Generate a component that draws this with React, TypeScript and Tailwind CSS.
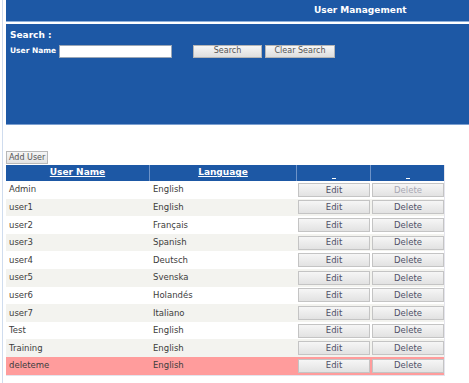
import React from "react";

const rows: { name: string; lang: string; del?: boolean; pink?: boolean }[] = [
  { name: "Admin", lang: "English", del: true },
  { name: "user1", lang: "English" },
  { name: "user2", lang: "Français" },
  { name: "user3", lang: "Spanish" },
  { name: "user4", lang: "Deutsch" },
  { name: "user5", lang: "Svenska" },
  { name: "user6", lang: "Holandés" },
  { name: "user7", lang: "Italiano" },
  { name: "Test", lang: "English" },
  { name: "Training", lang: "English" },
  { name: "deleteme", lang: "English", pink: true },
];

function Btn({ label, disabled }: { label: string; disabled?: boolean }) {
  return (
    <div
      className={`h-[14px] mx-[1px] flex items-center justify-center border border-[#c4c4c4] bg-gradient-to-b from-[#f6f6f6] to-[#e2e2e2] text-[8.5px] leading-none ${
        disabled ? "text-[#a8a8b4]" : "text-[#4f5068]"
      }`}
    >
      {label}
    </div>
  );
}

export default function App() {
  return (
    <div className="w-[469px] h-[383px] bg-white overflow-hidden font-['DejaVu_Sans',sans-serif] flex">
      <div className="w-[2px]" />
      <div className="w-[1px] bg-[#cfdcee]" />
      <div className="w-[3px]" />
      <div className="flex-1 flex flex-col">
        <div className="h-[21px] bg-[#1d58a5] flex items-center pl-[308px] text-white font-bold text-[9px] whitespace-nowrap">
          User Management
        </div>
        <div className="h-[1px] bg-[#8fb0da]" />
        <div className="h-[2px] bg-white" />
        <div className="h-[101px] bg-[#1d58a5] border-b border-[#7b9fd0] px-[4px] pt-[5px] flex flex-col">
          <div className="text-white font-bold text-[9px] leading-[12px]">Search :</div>
          <div className="flex items-center mt-[3px] h-[14px]">
            <span className="text-white font-bold text-[7.5px] w-[49px] shrink-0 whitespace-nowrap">User Name</span>
            <div className="w-[113px] shrink-0 h-[13px] bg-white border border-[#9aa6b6]" />
            <div className="ml-[21px] shrink-0 w-[69px] h-[13px] border border-[#b5b5b5] bg-gradient-to-b from-[#f6f6f6] to-[#dedede] text-[8px] text-[#555] flex items-center justify-center">
              Search
            </div>
            <div className="ml-[3px] shrink-0 w-[70px] h-[13px] border border-[#b5b5b5] bg-gradient-to-b from-[#f6f6f6] to-[#dedede] text-[8px] text-[#555] flex items-center justify-center whitespace-nowrap">
              Clear Search
            </div>
          </div>
        </div>
        <div className="h-[26px]" />
        <div className="flex">
          <div className="h-[13px] px-[2px] border border-[#b8b8b8] bg-gradient-to-b from-[#f6f6f6] to-[#e2e2e2] text-[8px] text-[#555] flex items-center">
            Add User
          </div>
        </div>
        <div className="h-[1px]" />
        <div className="w-[439px] border-r border-b border-[#e4e4ec]">
          <div className="grid grid-cols-[144px_147px_74px_74px] h-[16px] bg-[#1d58a5] text-white font-bold text-[9px]">
            <div className="flex items-center justify-center underline border-r border-[#6e93c8]">User Name</div>
            <div className="flex items-center justify-center underline border-r border-[#6e93c8]">Language</div>
            <div className="flex items-end justify-center pb-[2px] border-r border-[#6e93c8]">
              <div className="w-[4px] h-[1px] bg-white" />
            </div>
            <div className="flex items-end justify-center pb-[2px]">
              <div className="w-[4px] h-[1px] bg-white" />
            </div>
          </div>
          {rows.map((r, i) => (
            <div
              key={r.name}
              className={`grid grid-cols-[144px_147px_74px_74px] h-[17.6px] items-center text-[8.5px] text-[#3c3c3c] ${
                r.pink ? "bg-[#ff9c9c]" : i % 2 === 1 ? "bg-[#f3f3ef]" : "bg-white"
              }`}
            >
              <div className="pl-[3px]">{r.name}</div>
              <div className="pl-[3px]">{r.lang}</div>
              <Btn label="Edit" />
              <Btn label="Delete" disabled={r.del} />
            </div>
          ))}
        </div>
      </div>
    </div>
  );
}
